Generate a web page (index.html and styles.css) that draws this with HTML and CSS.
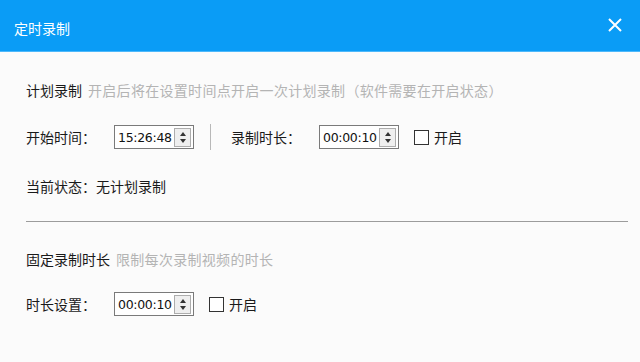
FILE: index.html
```html
<!DOCTYPE html>
<html lang="zh-CN">
<head>
  <meta charset="UTF-8">
  <title>定时录制</title>
  <link rel="stylesheet" href="styles.css">
</head>
<body>
  <div class="dialog">
    <div class="header">
      <span class="title">定时录制</span>
      <svg class="close" width="16" height="16" viewBox="0 0 16 16">
        <path d="M2 2 L14 14 M14 2 L2 14" stroke="#fff" stroke-width="2" fill="none"/>
      </svg>
    </div>

    <div class="content">
      <div class="section-title">计划录制<span class="hint">开启后将在设置时间点开启一次计划录制（软件需要在开启状态）</span></div>

      <div class="row row-first">
        <label class="label">开始时间：</label>
        <div class="spinbox">
          <span class="value">15:26:48</span>
          <span class="spin"><i class="up"></i><i class="down"></i></span>
        </div>
        <span class="vsep"></span>
        <label class="label">录制时长：</label>
        <div class="spinbox">
          <span class="value">00:00:10</span>
          <span class="spin"><i class="up"></i><i class="down"></i></span>
        </div>
        <span class="check"></span>
        <span class="check-text">开启</span>
      </div>

      <div class="status">当前状态：无计划录制</div>

      <div class="divider"></div>

      <div class="section-title second">固定录制时长<span class="hint">限制每次录制视频的时长</span></div>

      <div class="row row-second">
        <label class="label">时长设置：</label>
        <div class="spinbox">
          <span class="value">00:00:10</span>
          <span class="spin"><i class="up"></i><i class="down"></i></span>
        </div>
        <span class="check"></span>
        <span class="check-text">开启</span>
      </div>
    </div>
  </div>
</body>
</html>
```

FILE: styles.css
```css
body {
  margin: 0;
  font-family: "Noto Sans CJK SC", "Liberation Sans", sans-serif;
  font-size: 14px;
  color: #1a1a1a;
  background: #fbfbfb;
}
.dialog {
  width: 640px;
  height: 362px;
  overflow: hidden;
}
.header {
  height: 51px;
  background: #0a9cf6;
  border-bottom: 1px solid #4db8fa;
  display: flex;
  align-items: center;
  justify-content: space-between;
  padding: 0 17px 0 14px;
  box-sizing: content-box;
}
.title {
  color: #fff;
  font-size: 14px;
  margin-top: 4px;
}
.close {
  margin-top: -1px;
}
.content {
  padding: 0 12px 0 26px;
}
.section-title {
  height: 20px;
  line-height: 20px;
  margin-top: 28px;
}
.section-title.second {
  margin-top: 27px;
}
.hint {
  color: #b4b4b4;
  margin-left: 6px;
  letter-spacing: 0.3px;
}
.row {
  height: 24px;
  display: flex;
  align-items: center;
}
.row-first {
  margin-top: 25px;
}
.row-second {
  margin-top: 23px;
}
.label {
  width: 88px;
  flex-shrink: 0;
}
.spinbox {
  width: 80px;
  height: 24px;
  box-sizing: border-box;
  border: 1px solid #7a7a7a;
  background: #fff;
  display: flex;
  align-items: center;
  justify-content: space-between;
  padding: 0 2px 0 3px;
}
.value {
  font-family: "DejaVu Sans", "Liberation Sans", sans-serif;
  font-size: 12.5px;
  letter-spacing: -0.3px;
  color: #111;
}
.spin {
  width: 17px;
  height: 19px;
  box-sizing: border-box;
  border: 1px solid #adadad;
  background: #efefef;
  display: flex;
  flex-direction: column;
  align-items: center;
  justify-content: center;
  gap: 3px;
}
.spin i {
  width: 0;
  height: 0;
  border-left: 3px solid transparent;
  border-right: 3px solid transparent;
}
.spin .up {
  border-bottom: 4px solid #333;
}
.spin .down {
  border-top: 4px solid #333;
}
.vsep {
  width: 1px;
  height: 26px;
  background: #b8b8b8;
  margin: 0 20px 0 16px;
}
.check {
  width: 13px;
  height: 13px;
  border: 1px solid #333;
  background: #fff;
  margin-left: 15px;
  margin-right: 5px;
}
.status {
  height: 20px;
  line-height: 20px;
  margin-top: 27px;
}
.divider {
  height: 1px;
  background: #9c9c9c;
  margin-top: 25px;
}
```
